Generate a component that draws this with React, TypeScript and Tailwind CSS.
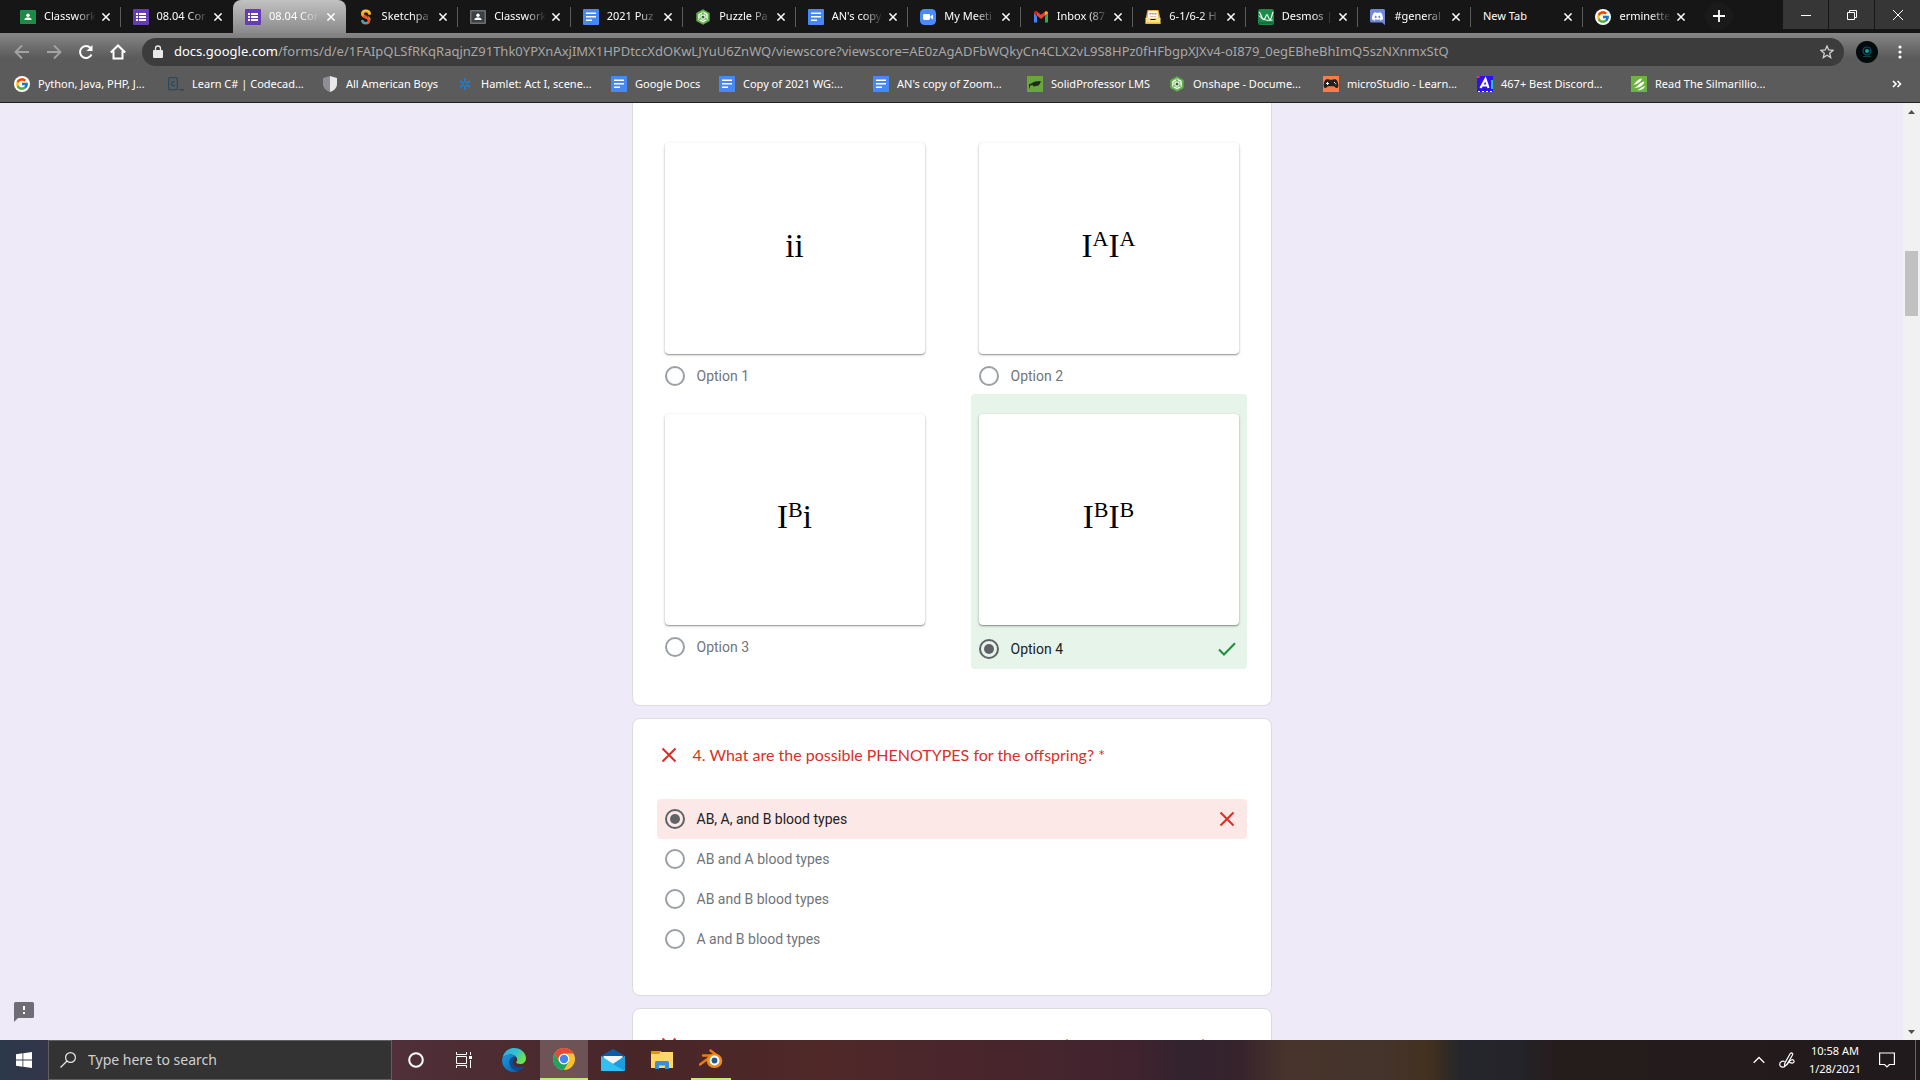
import React from 'react';
import { FcGoogle } from 'react-icons/fc';
import { SiDiscord } from 'react-icons/si';

type IconProps = { className?: string };

function ClassroomIcon({ gray = false }: { gray?: boolean }) {
  const edge = gray ? '#6b6e72' : '#1f8b4c';
  const board = gray ? '#3c4043' : '#1b8a45';
  return (
    <svg viewBox="0 0 16 16" className="size-4 shrink-0" aria-hidden="true">
      <rect x="0" y="1" width="16" height="14" rx="1" fill={edge} />
      <rect x="1.5" y="2.5" width="13" height="11" fill={board} />
      <circle cx="8" cy="6.2" r="1.7" fill="#fff" />
      <path d="M4.5 11V10.2C4.5 9 6.3 8.5 8 8.5s3.500.5 3.500 1.700V11z" fill="#fff" />
    </svg>
  );
}

function FormsIcon() {
  return (
    <svg viewBox="0 0 16 16" className="size-4 shrink-0" aria-hidden="true">
      <rect width="16" height="16" rx="1" fill="#673ab7" />
      <path d="M3 4h2v2H3zM3 7h2v2H3zM3 10h2v2H3zM6 4h7v2H6zM6 7h7v2H6zM6 10h7v2H6z" fill="#fff" />
    </svg>
  );
}

function DocsIcon() {
  return (
    <svg viewBox="0 0 16 16" className="size-4 shrink-0" aria-hidden="true">
      <rect width="16" height="16" rx="1" fill="#4688f4" />
      <path d="M3 3.500h10v1.500H3zM3 7h10v1.500H3zM3 10.500h6v1.500H3z" fill="#fff" />
    </svg>
  );
}

function SketchpadIcon() {
  return (
    <svg viewBox="0 0 16 16" className="size-4 shrink-0" fill="none" strokeLinecap="round" aria-hidden="true">
      <path d="M11.500 4.500C11 1.200 4.500 1 4.500 5c0 3 5.500 2.500 6.500 5" stroke="#f5a623" strokeWidth="3.200" />
      <path d="M11 3C9 .8 6 1 5 3" stroke="#f9d648" strokeWidth="1.200" />
      <path d="M6 7.500c2 1 5 1.500 5 4 0 3.500-6 3.500-6.500.5" stroke="#e8542f" strokeWidth="2.600" />
      <path d="M4.300 12c.7 1.800 3 2.500 4.700 1.800" stroke="#3aa6c9" strokeWidth="2" />
      <path d="M6.500 5.500c1 1 2.500 1 3.500 2" stroke="#3b2a1a" strokeWidth="1" />
    </svg>
  );
}

function OnshapeIcon() {
  return (
    <svg viewBox="0 0 16 16" className="size-4 shrink-0" fill="none" aria-hidden="true">
      <path d="M8 .3 14.700 4.100v7.800L8 15.700 1.300 11.900V4.100z" fill="#5cb246" />
      <path d="M8 3.200 12 5.500v4.800L8 12.700 4 10.400V5.600z" stroke="#fff" strokeWidth="1.400" />
      <circle cx="8" cy="8" r="2.100" fill="#2f6e25" stroke="#fff" strokeWidth="1.200" />
      <path d="M8 3v2.500M12 10.500 9.800 9.300M4 10.500l2.200-1.200" stroke="#5cb246" strokeWidth="1.200" />
    </svg>
  );
}

function ZoomIcon() {
  return (
    <svg viewBox="0 0 16 16" className="size-4 shrink-0" aria-hidden="true">
      <rect width="16" height="16" rx="4.500" fill="#4a8cff" />
      <rect x="3" y="5" width="7" height="6" rx="1.400" fill="#fff" />
      <path d="M10.500 7.200 13 5.400v5.200l-2.500-1.800z" fill="#fff" />
    </svg>
  );
}

function GmailIcon() {
  return (
    <svg viewBox="0 0 16 16" className="size-4 shrink-0" aria-hidden="true">
      <path d="M1 4v9.500h3V7.200z" fill="#4285f4" />
      <path d="M15 4v9.500h-3V7.200z" fill="#34a853" />
      <path d="M1 4.200C1 2.400 3 1.800 4.200 2.800L8 5.800l3.800-3C13 1.800 15 2.400 15 4.200L8 10z" fill="#ea4335" />
      <path d="M12 2.800C13.200 1.900 15 2.500 15 4.200l-3 2.400z" fill="#fbbc04" />
      <path d="M1 4.200C1 2.500 2.800 1.900 4 2.800v3.800z" fill="#c5221f" />
    </svg>
  );
}

function InboxTrayIcon() {
  return (
    <svg viewBox="0 0 16 16" className="size-4 shrink-0" aria-hidden="true">
      <path d="M2.500 1h11l2 9H.500z" fill="#f0a93c" />
      <path d="M3.500 2h9l1 7.500h-11z" fill="#fff" />
      <path d="M4.500 4h2v1.500h-2zM7.200 4h1.600v1.500H7.200zM9.500 4h2v1.500h-2z" fill="#e0736c" />
      <path d="M5 7h6v1H5z" fill="#f0b9a0" />
      <path d="M.5 9h4l1.200 2h4.600l1.200-2h4v5.500H.500z" fill="#fbe28a" />
      <path d="M.500 13.500h15v1.500H.500z" fill="#e8b63a" />
    </svg>
  );
}

function DesmosIcon() {
  return (
    <svg viewBox="0 0 16 16" className="size-4 shrink-0" fill="none" aria-hidden="true">
      <rect width="16" height="16" rx="2.500" fill="#1d8a4b" />
      <path d="M1 3c2 .5 2.500 7.500 4.500 7.500S8 5.500 9 5.500s1.500 5 3 5S14 5 15 3" stroke="#fff" strokeWidth="1.200" />
      <path d="M1 6.500c3 4.500 9 5.500 13.500 4.500" stroke="#fff" strokeWidth="1" />
      <path d="M1 14h14" stroke="#126636" strokeWidth="1.500" />
    </svg>
  );
}

function DiscordIcon() {
  return (
    <svg viewBox="0 0 16 16" className="size-4 shrink-0" aria-hidden="true">
      <path d="M1.500 0h12A1.500 1.500 0 0 1 15 1.500V16l-3-2.500H1.500A1.500 1.500 0 0 1 0 12V1.500A1.500 1.500 0 0 1 1.500 0z" fill="#7289da" />
      <SiDiscord x="2" y="2" width="11" height="10" color="#fff" />
    </svg>
  );
}

function GoogleIcon() {
  return (
    <span className="grid size-4 shrink-0 place-items-center rounded-full bg-white">
      <FcGoogle className="size-3.5" aria-hidden="true" />
    </span>
  );
}

function CodecademyIcon() {
  return (
    <svg viewBox="0 0 16 16" className="size-4 shrink-0" fill="none" stroke="#2b4a5e" aria-hidden="true">
      <rect x=".7" y="1.700" width="8.600" height="12" rx="1" strokeWidth="1.300" />
      <path d="M6.700 6.300C5.200 4.900 3.500 6 3.500 7.700s1.700 2.800 3.200 1.400" strokeWidth="1.300" />
      <path d="M11.500 13.700H16" strokeWidth="1.500" />
    </svg>
  );
}

function ShieldIcon() {
  return (
    <svg viewBox="0 0 16 16" className="size-4 shrink-0" aria-hidden="true">
      <path d="M8 0 1 2v6c0 4 3.500 7 7 8z" fill="#8d8f94" />
      <path d="M8 0l7 2v6c0 4-3.500 7-7 8z" fill="#e8e8ea" />
    </svg>
  );
}

function AsteriskIcon() {
  return (
    <svg viewBox="0 0 16 16" className="size-4 shrink-0" stroke="#1e7fd6" strokeWidth="1.800" aria-hidden="true">
      <path d="M8 2v4.500M8 9.500V14M2.800 5l3.900 2.200M9.300 8.800l3.900 2.200M2.800 11l3.900-2.200M9.300 7.200 13.200 5" />
    </svg>
  );
}

function SolidProfessorIcon() {
  return (
    <svg viewBox="0 0 16 16" className="size-4 shrink-0" aria-hidden="true">
      <rect width="16" height="16" fill="#69a63e" />
      <path d="M2 8.500 8 5.500l6-.5-1 2.500-1.500 2-5 1-1-1.500-2.500.8-.5 2.700H2z" fill="#1f2a1a" />
    </svg>
  );
}

function MicroStudioIcon() {
  return (
    <svg viewBox="0 0 16 16" className="size-4 shrink-0" aria-hidden="true">
      <rect width="16" height="16" fill="#ff7a45" />
      <path d="M3 3.500c1.800-.8 3 .3 5 .3s3.200-1.100 5-.3c1.500.7 2.600 4.500 2.300 6.800-.3 2.200-2.400 2.200-3.400.7-.5-.8-2-.8-3.900-.8s-3.400 0-3.900.8C3.100 12.500 1 12.500.7 10.300.4 8 1.500 4.200 3 3.500z" fill="#222" />
      <path d="M4 6h1v1h1v1H5v1H4V8H3V7h1zM11 6h1v1h-1zM12.200 7.300h1v1h-1z" fill="#fff" />
    </svg>
  );
}

function LetterBadgeIcon() {
  return (
    <svg viewBox="0 0 16 16" className="size-4 shrink-0" fill="none" aria-hidden="true">
      <rect width="16" height="16" fill="#2f10f0" />
      <rect width="2.500" height="2" fill="#ff2f6e" />
      <rect x="14" y="4" width="2" height="9" fill="#19c5d8" />
      <path d="M3.500 12 8.500 3l3 9M5.500 9.500h6" stroke="#fff" strokeWidth="2.200" />
      <path d="M1 15.500h14" stroke="#fff" strokeDasharray="2 2" />
    </svg>
  );
}

function GreenWaveIcon() {
  return (
    <svg viewBox="0 0 16 16" className="size-4 shrink-0" fill="none" aria-hidden="true">
      <rect width="16" height="16" fill="#6db33f" />
      <path d="M2 8.500C5 7.500 6 3 11 2.500 10 5.500 6 9 2 8.500zM3.500 11.500C7 10.500 9 6 13.500 5.500 13 9 8 12.500 3.500 11.500zM6.500 14C9 13.500 10.500 10.500 14 10c-.7 2.800-4 4.800-7.500 4z" fill="#fff" />
    </svg>
  );
}

function ChromeIcon({ className }: IconProps) {
  return (
    <svg viewBox="0 0 24 24" className={className} aria-hidden="true">
      <circle cx="12" cy="12" r="11" fill="#fbc02d" />
      <path d="M2.470 6.500A11 11 0 0 1 21.530 6.500H12a5.500 5.500 0 0 0-4.800 8.200z" fill="#e24a3b" />
      <path d="M2.470 6.500A11 11 0 0 0 11.800 23l4.960-8.250a5.500 5.500 0 0 1-9.560 0z" fill="#1ea362" />
      <circle cx="12" cy="12" r="5.300" fill="#fff" />
      <circle cx="12" cy="12" r="4.200" fill="#4285f4" />
    </svg>
  );
}

function EdgeIcon({ className }: IconProps) {
  return (
    <svg viewBox="0 0 24 24" className={className} aria-hidden="true">
      <defs>
        <linearGradient id="edge-top" x1="0" y1="0" x2="1" y2=".4">
          <stop offset="0" stopColor="#2fa9e8" />
          <stop offset=".6" stopColor="#33c2d0" />
          <stop offset="1" stopColor="#6ee04f" />
        </linearGradient>
        <linearGradient id="edge-body" x1="0" y1="0" x2="1" y2="1">
          <stop offset="0" stopColor="#1a9be6" />
          <stop offset="1" stopColor="#0c59a4" />
        </linearGradient>
      </defs>
      <path d="M.5 10C1.500 4 6.300 0 12 0c7 0 12 5 12 10.200 0 3.600-2.600 5.800-5.800 5.800-2.400 0-4-.8-4-1.700 0-.6 1-1 1-2.900C15.200 8.700 12 6.500 8.500 6.500 4.500 6.500 1.500 8.500.5 10z" fill="url(#edge-top)" />
      <path d="M.2 11C1.500 8 4.500 6.500 8.500 6.500c2.500 0 4.500.9 5.700 2.400-4-.9-6.600 1.800-6.600 5.300 0 4.800 4.200 9 9.400 8.500C15.500 23.500 14 24 12 24 5 24-.5 18.500.2 11z" fill="url(#edge-body)" />
      <path d="M14.200 8.900c-4-.9-6.600 1.800-6.600 5.300 0 4.800 4.200 9 9.400 8.500 2-.8 3.800-2.200 5-4-.8-.6-3.200 1-6.200.6-3.300-.4-5.300-3-4.800-5.900.3-1.900 1.500-3.400 3.200-4.500z" fill="#0b4a94" />
    </svg>
  );
}

function MailIcon({ className }: IconProps) {
  return (
    <svg viewBox="0 0 24 24" className={className} aria-hidden="true">
      <path d="M0 8 12 1l12 7v3H0z" fill="#0a5cab" />
      <path d="M2.500 8h19v8h-19z" fill="#f4f4f4" />
      <path d="M0 8v15h24V8l-12 8z" fill="#29b3f0" />
      <path d="M0 8v15h24L10 14.700z" fill="#35bdf5" />
      <path d="M24 8v15L12 16z" fill="#1f9be0" />
    </svg>
  );
}

function FolderIcon({ className }: IconProps) {
  return (
    <svg viewBox="0 0 24 24" className={className} aria-hidden="true">
      <path d="M1 3h9l1.500 1H23v16H1z" fill="#ffd764" />
      <path d="M1 3h9v2L9 6H1z" fill="#d99a12" />
      <path d="M5 21v-6.500a1.500 1.500 0 0 1 1.500-1.500h11a1.500 1.500 0 0 1 1.500 1.500V21h-4v-3.500H9V21z" fill="#3a8fd8" />
    </svg>
  );
}

function BlenderIcon({ className }: IconProps) {
  return (
    <svg viewBox="0 0 24 24" className={className} fill="none" aria-hidden="true">
      <path d="M1 17.500 10.500 10.500M4 8.500h10M11.500 3.500 20 10" stroke="#e87d0d" strokeWidth="2.400" strokeLinecap="round" />
      <ellipse cx="15.500" cy="13.800" rx="7.800" ry="7.200" fill="#f08a1d" />
      <circle cx="15.500" cy="13.500" r="4.900" fill="#fff" />
      <circle cx="15.500" cy="13.500" r="2.900" fill="#265787" />
    </svg>
  );
}

function CrossMark() {
  return (
    <svg viewBox="0 0 16 16" className="size-4 shrink-0" stroke="#d93025" strokeWidth="2" aria-label="Incorrect" role="img">
      <path d="M1.500 1.500l13 13M14.500 1.500l-13 13" />
    </svg>
  );
}

function CloseX() {
  return (
    <svg viewBox="0 0 8 8" className="size-2" stroke="#fff" strokeWidth="1.500" aria-hidden="true">
      <path d="M.4.4l7.200 7.200M7.600.4.4 7.600" />
    </svg>
  );
}

const tabs: { title: string; icon?: React.ReactNode; active?: boolean; divider?: boolean }[] = [
  { title: 'Classwork', icon: <ClassroomIcon />, divider: true },
  { title: '08.04 Cor', icon: <FormsIcon /> },
  { title: '08.04 Cor', icon: <FormsIcon />, active: true },
  { title: 'Sketchpa', icon: <SketchpadIcon />, divider: true },
  { title: 'Classwork', icon: <ClassroomIcon gray />, divider: true },
  { title: '2021 Puz', icon: <DocsIcon />, divider: true },
  { title: 'Puzzle Pa', icon: <OnshapeIcon />, divider: true },
  { title: "AN's copy", icon: <DocsIcon />, divider: true },
  { title: 'My Meeti', icon: <ZoomIcon />, divider: true },
  { title: 'Inbox (87', icon: <GmailIcon />, divider: true },
  { title: '6-1/6-2 H', icon: <InboxTrayIcon />, divider: true },
  { title: 'Desmos |', icon: <DesmosIcon />, divider: true },
  { title: '#general', icon: <DiscordIcon />, divider: true },
  { title: 'New Tab', divider: true },
  { title: 'erminette', icon: <GoogleIcon /> },
];

function TabStrip() {
  return (
    <div className="flex h-[33px] bg-[#161616] pl-2">
      <div className="flex min-w-0 flex-1" role="tablist">
        {tabs.map((tab, i) => (
          <div
            key={i}
            className={
              tab.active
                ? 'flex h-full min-w-0 flex-1 items-center rounded-t-lg bg-linear-to-b from-[#c2c2c2] to-[#8a8a8a] pl-3'
                : 'flex h-full min-w-0 flex-1 items-center pl-3'
            }
          >
            <button
              role="tab"
              aria-selected={!!tab.active}
              className="flex h-full min-w-0 flex-1 items-center gap-2 text-left text-[11px] text-white"
            >
              {tab.icon}
              <span
                className={
                  tab.title === 'New Tab'
                    ? 'min-w-0 flex-1 whitespace-nowrap'
                    : 'min-w-0 flex-1 mask-r-from-60% whitespace-nowrap'
                }
              >
                {tab.title}
              </span>
            </button>
            <button aria-label="Close tab" className="grid h-full w-5 shrink-0 place-items-center">
              <CloseX />
            </button>
            <span className={tab.divider ? 'ml-1 h-5 w-px bg-[#5c5c5c]' : 'ml-1 h-5 w-px'} />
          </div>
        ))}
      </div>
      <button aria-label="New tab" className="mt-0.5 mr-[50px] ml-[9px] grid size-7 place-items-center rounded-full bg-[#1a1a1a]">
        <svg viewBox="0 0 12 12" className="size-3" stroke="#fff" strokeWidth="1.800" aria-hidden="true">
          <path d="M6 0v12M0 6h12" />
        </svg>
      </button>
      <div className="flex h-[29px] gap-px">
        <button aria-label="Minimize" className="grid w-[45px] place-items-center bg-[#363636]">
          <svg viewBox="0 0 10 10" className="size-2.5" stroke="#fff" aria-hidden="true"><path d="M0 5.500h10" /></svg>
        </button>
        <button aria-label="Restore" className="grid w-[45px] place-items-center bg-[#363636]">
          <svg viewBox="0 0 10 10" className="size-2.5" stroke="#fff" fill="none" aria-hidden="true">
            <path d="M.5 2.500h7v7h-7zM2.500 2.500v-2h7v7h-2" />
          </svg>
        </button>
        <button aria-label="Close" className="grid w-[45px] place-items-center bg-[#363636]">
          <svg viewBox="0 0 10 10" className="size-2.5" stroke="#fff" aria-hidden="true"><path d="M0 0l10 10M10 0 0 10" /></svg>
        </button>
      </div>
    </div>
  );
}

function Toolbar() {
  return (
    <div className="flex h-[33px] items-center bg-linear-to-b from-[#878787] to-[#5b5b5b] to-75% pt-1 pr-4 pl-[14px]">
      <div className="flex flex-1 items-center gap-4">
        <button aria-label="Back" className="grid size-4 place-items-center">
          <svg viewBox="0 0 16 16" className="size-4" fill="none" stroke="#a3a3a3" strokeWidth="1.800" aria-hidden="true">
            <path d="M15 8H2M8 1.500 1.500 8 8 14.500" />
          </svg>
        </button>
        <button aria-label="Forward" className="grid size-4 place-items-center">
          <svg viewBox="0 0 16 16" className="size-4" fill="none" stroke="#a3a3a3" strokeWidth="1.800" aria-hidden="true">
            <path d="M1 8h13M8 1.500 14.500 8 8 14.500" />
          </svg>
        </button>
        <button aria-label="Reload" className="grid size-4 place-items-center">
          <svg viewBox="0 0 16 16" className="size-4" fill="none" stroke="#fff" strokeWidth="2" aria-hidden="true">
            <path d="M13.500 10.500A6 6 0 1 1 12.500 4" />
            <path d="M14.500 1v6h-6z" fill="#fff" stroke="none" />
          </svg>
        </button>
        <button aria-label="Home" className="grid size-4 place-items-center">
          <svg viewBox="0 0 16 16" className="size-4" fill="none" stroke="#fff" strokeWidth="2" aria-hidden="true">
            <path d="M3.500 7v7.500h9V7M.8 8.500 8 1.500l7.200 7" />
          </svg>
        </button>
        <div className="flex h-7 min-w-0 flex-1 items-center rounded-full bg-[#3c3c3c] px-2.5 text-[13px] text-[#a8a8a8]">
          <svg viewBox="0 0 12 14" className="mr-2.5 h-3.5 w-3 shrink-0" aria-hidden="true">
            <path d="M2 5h8a1 1 0 0 1 1 1v6a1 1 0 0 1-1 1H2a1 1 0 0 1-1-1V6a1 1 0 0 1 1-1z" fill="#e8e8e8" />
            <path d="M3.500 5.500v-2a2.500 2.500 0 0 1 5 0v2" fill="none" stroke="#e8e8e8" strokeWidth="1.300" />
          </svg>
          <p className="min-w-0 flex-1 overflow-hidden whitespace-nowrap">
            <span className="text-white">docs.google.com</span>
            /forms/d/e/1FAIpQLSfRKqRaqjnZ91Thk0YPXnAxjIMX1HPDtccXdOKwLJYuU6ZnWQ/viewscore?viewscore=AE0zAgADFbWQkyCn4CLX2vL9S8HPz0fHFbgpXJXv4-oI879_0egEBheBhImQ5szNXnmxStQ
          </p>
          <button aria-label="Bookmark this page">
            <svg viewBox="0 0 14 14" className="size-3.5" fill="none" stroke="#d0d0d0" strokeWidth="1.300" aria-hidden="true">
              <path d="M7 1l1.700 4 4.300.4-3.300 2.800 1 4.300L7 10.200l-3.700 2.300 1-4.300L1 5.400 5.300 5z" />
            </svg>
          </button>
        </div>
      </div>
      <button aria-label="Profile" className="ml-3 size-[22px] rounded-full">
        <svg viewBox="0 0 22 22" className="size-[22px]" fill="none" aria-hidden="true">
          <circle cx="11" cy="11" r="11" fill="#020a0c" />
          <circle cx="11" cy="10" r="4" stroke="#0b5080" strokeWidth="1.200" />
          <circle cx="11" cy="10" r="2" fill="#12a58a" />
          <path d="M7 15.500h8" stroke="#0a4a30" />
        </svg>
      </button>
      <button aria-label="Menu" className="ml-[18px] grid w-2 place-items-center">
        <svg viewBox="0 0 4 14" className="h-3.5 w-1" fill="#fff" aria-hidden="true">
          <circle cx="2" cy="2" r="1.600" /><circle cx="2" cy="7" r="1.600" /><circle cx="2" cy="12" r="1.600" />
        </svg>
      </button>
    </div>
  );
}

const bookmarks = [
  { title: 'Python, Java, PHP, J...', icon: <GoogleIcon />, width: 'w-[154px]' },
  { title: 'Learn C# | Codecad...', icon: <CodecademyIcon />, width: 'w-[154px]' },
  { title: 'All American Boys', icon: <ShieldIcon />, width: 'w-[135px]' },
  { title: 'Hamlet: Act I, scene...', icon: <AsteriskIcon />, width: 'w-[154px]' },
  { title: 'Google Docs', icon: <DocsIcon />, width: 'w-[108px]' },
  { title: 'Copy of 2021 WG:...', icon: <DocsIcon />, width: 'w-[154px]' },
  { title: "AN's copy of Zoom...", icon: <DocsIcon />, width: 'w-[154px]' },
  { title: 'SolidProfessor LMS', icon: <SolidProfessorIcon />, width: 'w-[142px]' },
  { title: 'Onshape - Docume...', icon: <OnshapeIcon />, width: 'w-[154px]' },
  { title: 'microStudio - Learn...', icon: <MicroStudioIcon />, width: 'w-[154px]' },
  { title: '467+ Best Discord...', icon: <LetterBadgeIcon />, width: 'w-[154px]' },
  { title: 'Read The Silmarillio...', icon: <GreenWaveIcon />, width: 'w-[154px]' },
];

function BookmarksBar() {
  return (
    <nav aria-label="Bookmarks" className="flex h-[37px] items-center border-b border-[#202020] bg-[#5b5b5b] px-[14px] text-[11px] text-white">
      {bookmarks.map((b) => (
        <a key={b.title} href="#" className={`flex shrink-0 items-center gap-2 whitespace-nowrap ${b.width}`}>
          {b.icon}
          {b.title}
        </a>
      ))}
      <button aria-label="More bookmarks" className="mr-1 ml-auto">
        <svg viewBox="0 0 10 8" className="h-2 w-2.5" fill="none" stroke="#fff" strokeWidth="1.600" aria-hidden="true">
          <path d="M1 1l3 3-3 3M5.500 1l3 3-3 3" />
        </svg>
      </button>
    </nav>
  );
}

const radioClass =
  'size-5 shrink-0 appearance-none rounded-full border-2 border-[#9aa0a6] bg-clip-content p-[3px] checked:border-[#5f6368] checked:bg-[#5f6368]';

function Sup({ children }: { children: React.ReactNode }) {
  return <span className="align-[11px] text-[22px] leading-none">{children}</span>;
}

const imageOptions = [
  { label: 'Option 1', art: <>ii</> },
  { label: 'Option 2', art: <>I<Sup>A</Sup>I<Sup>A</Sup></> },
  { label: 'Option 3', art: <>I<Sup>B</Sup>i</> },
  { label: 'Option 4', art: <>I<Sup>B</Sup>I<Sup>B</Sup></>, correct: true },
];

function ImageQuestion() {
  return (
    <section className="rounded-b-lg border border-t-0 border-[#dadce0] bg-white px-6 pt-5 pb-9">
      <div className="grid grid-cols-[276px_276px] justify-between">
        {imageOptions.map((o) => (
          <label
            key={o.label}
            className={
              o.correct
                ? 'flex flex-col gap-3.5 rounded bg-[#e6f4ea] px-2 pt-5 pb-2.5 text-[#202124]'
                : 'flex flex-col gap-3 px-2 pt-5 pb-2 text-[#70757a]'
            }
          >
            <span className="flex h-[211px] items-center justify-center rounded bg-white pb-1.5 font-['Liberation_Serif',serif] text-[33px] leading-10 text-black shadow-[0_1px_3px_rgba(0,0,0,0.25),0_1px_1px_rgba(0,0,0,0.25)]">
              <span>{o.art}</span>
            </span>
            <span className="flex h-5 items-center gap-3">
              <input type="radio" name="q3" defaultChecked={o.correct} className={radioClass} />
              <span className="flex-1">{o.label}</span>
              {o.correct && (
                <svg viewBox="0 0 18 14" className="mr-[3px] h-3.5 w-[18px]" fill="none" stroke="#1e8e3e" strokeWidth="2" role="img" aria-label="Correct">
                  <path d="M1 7.500l5 5L17 1.200" />
                </svg>
              )}
            </span>
          </label>
        ))}
      </div>
    </section>
  );
}

function QuestionTitle({ children }: { children: React.ReactNode }) {
  return (
    <h2 className="flex h-6 items-center gap-4 pl-1 font-[Lato,sans-serif] text-base whitespace-nowrap text-[#d93025]">
      <CrossMark />
      {children}
    </h2>
  );
}

const answers = ['AB, A, and B blood types', 'AB and A blood types', 'AB and B blood types', 'A and B blood types'];

function FormPage() {
  return (
    <main className="relative min-w-0 flex-1 overflow-hidden bg-[#eeeaf8] font-[Roboto,sans-serif] text-sm">
      <div className="mx-auto flex w-[640px] max-w-full flex-col gap-3">
        <ImageQuestion />
        <section className="rounded-lg border border-[#dadce0] bg-white px-6 pt-6 pb-9">
          <QuestionTitle>4. What are the possible PHENOTYPES for the offspring? *</QuestionTitle>
          <div className="mt-8">
            {answers.map((a, i) => (
              <label
                key={a}
                className={
                  i === 0
                    ? 'flex h-10 items-center gap-3 rounded bg-[#fce8e6] px-2 text-[#202124]'
                    : 'flex h-10 items-center gap-3 px-2 text-[#70757a]'
                }
              >
                <input type="radio" name="q4" defaultChecked={i === 0} className={radioClass} />
                <span className="flex-1">{a}</span>
                {i === 0 && <span className="mr-1"><CrossMark /></span>}
              </label>
            ))}
          </div>
        </section>
        <section className="rounded-t-lg border border-[#dadce0] bg-white px-6 pt-6 pb-9">
          <QuestionTitle>5. What are the possible GENOTYPES for this cross? (check all that apply) *</QuestionTitle>
        </section>
      </div>
      <button aria-label="Report a problem" className="absolute bottom-[18px] left-[14px]">
        <svg viewBox="0 0 20 20" className="size-5" aria-hidden="true">
          <path d="M1.500 0h17A1.500 1.500 0 0 1 20 1.500v13a1.500 1.500 0 0 1-1.500 1.500H4l-4 4V1.500A1.500 1.500 0 0 1 1.500 0z" fill="#706c75" />
          <path d="M9 4h2v4H9zM9 10h2v2H9z" fill="#fff" />
        </svg>
      </button>
    </main>
  );
}

function Scrollbar() {
  return (
    <div className="flex w-[17px] flex-col items-center bg-[#f1f1f1]" aria-hidden="true">
      <svg viewBox="0 0 17 17" className="size-[17px]" fill="#505050"><path d="M5 11h7L8.500 7z" /></svg>
      <div className="flex w-full flex-1 flex-col items-center">
        <div className="flex-[131]" />
        <div className="w-[13px] flex-[65] bg-[#c1c1c1]" />
        <div className="flex-[707]" />
      </div>
      <svg viewBox="0 0 17 17" className="size-[17px]" fill="#505050"><path d="M5 7h7l-3.500 4z" /></svg>
    </div>
  );
}

function Taskbar() {
  return (
    <footer className="flex h-10 bg-[linear-gradient(90deg,#2b394a_0%,#33354a_2.5%,#50303a_20%,#482628_33%,#502828_43%,#48252d_52%,#40232e_59%,#33232f_61.5%,#36232c_64.5%,#48342c_67%,#44342b_72%,#42301f_74.500%,#25262b_76%,#24242a_79%,#261c1c_81%,#201a1c_100%)] text-white">
      <button aria-label="Start" className="grid w-12 place-items-center">
        <svg viewBox="0 0 16 16" className="size-4" fill="#fff" aria-hidden="true">
          <path d="M0 2.200 6.500 1.300v6.300H0zM7.300 1.200 16 0v7.600H7.300zM0 8.400h6.500v6.300L0 13.800zM7.300 8.400H16V16l-8.700-1.200z" />
        </svg>
      </button>
      <label className="flex w-[344px] items-center gap-3 border border-[#5f5f5f] bg-[#333] px-[11px]">
        <svg viewBox="0 0 16 16" className="size-4 shrink-0" fill="none" stroke="#e8e8e8" strokeWidth="1.200" aria-hidden="true">
          <circle cx="10.500" cy="5.500" r="4.900" />
          <path d="M7 9 .5 15.500" />
        </svg>
        <input
          type="text"
          aria-label="Search"
          placeholder="Type here to search"
          className="min-w-0 flex-1 bg-transparent text-sm outline-none placeholder:text-[#d0d0d0]"
        />
      </label>
      <button aria-label="Cortana" className="grid w-12 place-items-center">
        <svg viewBox="0 0 16 16" className="size-4" fill="none" stroke="#fff" strokeWidth="2" aria-hidden="true"><circle cx="8" cy="8" r="6.800" /></svg>
      </button>
      <button aria-label="Task view" className="grid w-12 place-items-center">
        <svg viewBox="0 0 16 16" className="size-4" fill="none" stroke="#fff" aria-hidden="true">
          <path d="M.5 4.500h10v7H.500zM.5 0v2.500h10V0M.5 16v-2.500h10V16M14.500 0v3M14.500 8v8" />
          <rect x="13" y="4" width="3" height="3" fill="#fff" stroke="none" />
        </svg>
      </button>
      <button aria-label="Microsoft Edge" className="grid w-[52px] place-items-center">
        <EdgeIcon className="size-6" />
      </button>
      <button aria-label="Google Chrome" className="grid w-12 place-items-center border-b-2 border-[#b8f26b] bg-white/20">
        <ChromeIcon className="size-6" />
      </button>
      <button aria-label="Mail" className="grid w-[50px] place-items-center">
        <MailIcon className="size-6" />
      </button>
      <button aria-label="File Explorer" className="grid w-12 place-items-center">
        <FolderIcon className="size-6" />
      </button>
      <button aria-label="Blender" className="ml-[5px] grid w-10 place-items-center border-b-2 border-[#b8f26b]">
        <BlenderIcon className="size-6" />
      </button>
      <div className="ml-auto flex items-center">
        <button aria-label="Show hidden icons" className="mr-3.5">
          <svg viewBox="0 0 12 8" className="h-2 w-3" fill="none" stroke="#fff" strokeWidth="1.300" aria-hidden="true"><path d="M.7 6.800 6 1.500l5.300 5.300" /></svg>
        </button>
        <button aria-label="Pen workspace" className="mr-3.5">
          <svg viewBox="0 0 16 16" className="size-4" fill="none" stroke="#fff" strokeWidth="1.200" aria-hidden="true">
            <path d="M12.500.8c1.200.2 1.500 1.200 1 2.200L8 12.500l-2.500 2 .3-3.200L11.300 1.500z" />
            <path d="M5.700 9.500C3 8.500.7 10 .7 12.200c0 2.500 3 3.800 5 2.300M8 12.500c1-2 4-5 5.500-4.800 1.800.3 2.300 2.800.3 3.300-1.300.3-2.300-1-3.300 0" />
          </svg>
        </button>
        <div className="flex w-[52px] flex-col items-center text-[11px] leading-[18px]">
          <span>10:58 AM</span>
          <span>1/28/2021</span>
        </div>
        <button aria-label="Notifications" className="ml-[18px]">
          <svg viewBox="0 0 16 16" className="size-4" fill="none" stroke="#fff" strokeWidth="1.200" aria-hidden="true">
            <path d="M.6 1h14.800v11.500h-5L8 15l-2.400-2.500h-5z" />
          </svg>
        </button>
        <div className="ml-5 h-10 w-[5px] border-l border-[#6a6668]" />
      </div>
    </footer>
  );
}

export default function App() {
  return (
    <div className="flex h-screen flex-col overflow-hidden font-['Noto_Sans','Open_Sans',sans-serif]">
      <header>
        <TabStrip />
        <Toolbar />
        <BookmarksBar />
      </header>
      <div className="flex min-h-0 flex-1">
        <FormPage />
        <Scrollbar />
      </div>
      <Taskbar />
    </div>
  );
}
